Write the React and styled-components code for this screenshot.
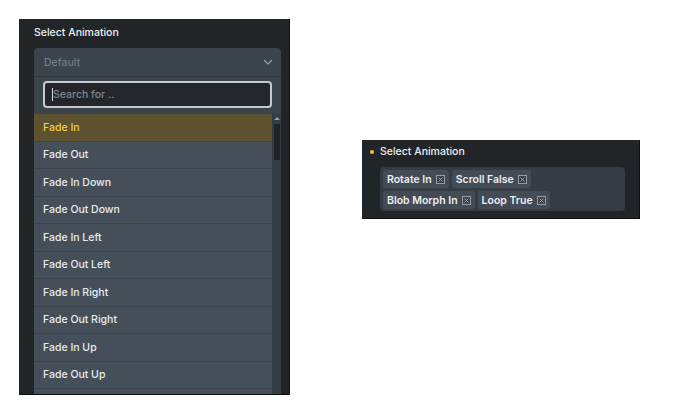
import React from 'react';
import styled, { createGlobalStyle } from 'styled-components';

const GlobalStyle = createGlobalStyle`
  html, body {
    margin: 0;
    padding: 0;
    background: #ffffff;
    font-family: Inter, "Noto Sans", sans-serif;
  }
`;

const Page = styled.div`
  display: flex;
  align-items: flex-start;
  gap: 72px;
  padding: 19px 0 0 19px;
  width: 690px;
  height: 416px;
  box-sizing: border-box;
  overflow: hidden;
`;

const Panel = styled.div`
  width: 271px;
  height: 376px;
  box-sizing: border-box;
  background: #212528;
  border-right: 1px solid #0d0f10;
  border-bottom: 1px solid #0d0f10;
  padding: 0 8px 0 15px;
  overflow: hidden;
  display: flex;
  flex-direction: column;
`;

const Title = styled.div`
  font-size: 10.5px;
  font-weight: 500;
  color: #eef0f2;
  height: 29px;
  display: flex;
  align-items: center;
  padding-bottom: 2px;
  box-sizing: border-box;
  gap: 5px;
`;

const Select = styled.div`
  display: flex;
  flex-direction: column;
  flex: 1;
  min-height: 0;
  background: #3b434b;
  border-radius: 4px 4px 0 0;
`;

const SelectHead = styled.div`
  height: 28px;
  display: flex;
  align-items: center;
  justify-content: space-between;
  padding: 0 8px 0 10px;
  font-size: 10.5px;
  font-weight: 500;
  color: #737b83;
  border-bottom: 1px solid #30373e;
`;

const SearchWrap = styled.div`
  padding: 4px 9px 6px 9px;
`;

const SearchBox = styled.div`
  height: 27px;
  box-sizing: border-box;
  border: 2px solid #c6cacf;
  border-radius: 4px;
  background: #23272b;
  display: flex;
  align-items: center;
  padding-left: 7px;
  font-size: 10.5px;
  font-weight: 500;
  color: #80868c;
`;

const Caret = styled.span`
  display: inline-block;
  width: 1px;
  height: 13px;
  background: #d8dbde;
`;

const ListArea = styled.div`
  display: flex;
  flex: 1;
  min-height: 0;
`;

const List = styled.div`
  flex: 1;
  display: flex;
  flex-direction: column;
  background: #454f59;
`;

const Item = styled.div`
  height: 27.5px;
  flex-shrink: 0;
  box-sizing: border-box;
  display: flex;
  align-items: center;
  padding-left: 9px;
  font-size: 10.5px;
  font-weight: 500;
  background: ${p => (p.$active ? '#5c522f' : '#454f59')};
  color: ${p => (p.$active ? '#f7cc3d' : '#e9ecee')};
  border-bottom: 1px solid #3a434c;
`;

const Scrollbar = styled.div`
  width: 9px;
  background: #353d44;
  display: flex;
  flex-direction: column;
  align-items: center;
  padding-top: 3px;
`;

const Arrow = styled.div`
  width: 0;
  height: 0;
  border-left: 3px solid transparent;
  border-right: 3px solid transparent;
  border-bottom: 3px solid #9aa1a7;
`;

const Thumb = styled.div`
  width: 6px;
  height: 36px;
  margin-top: 4px;
  background: #1f2326;
  border-radius: 1px;
`;

const SmallPanel = styled.div`
  margin-top: 121px;
  width: 278px;
  height: 79px;
  box-sizing: border-box;
  background: #212528;
  border-right: 1px solid #0d0f10;
  border-bottom: 1px solid #0d0f10;
  padding: 0 14px 0 8px;
  display: flex;
  flex-direction: column;
`;

const Dot = styled.span`
  width: 4px;
  height: 4px;
  border-radius: 50%;
  background: #f2c230;
  margin-right: 1px;
`;

const SmallTitle = styled(Title)`
  height: 23px;
  padding-bottom: 0;
  padding-top: 0;
`;

const TagBox = styled.div`
  margin-left: 10px;
  margin-top: 4px;
  background: #353c44;
  border-radius: 4px;
  padding: 3px 3px 2px 3px;
  display: flex;
  flex-wrap: wrap;
  gap: 3px;
`;

const Tag = styled.div`
  height: 18px;
  display: flex;
  align-items: center;
  gap: 4px;
  padding: 0 4px;
  background: #434c55;
  border-radius: 3px;
  font-size: 10.5px;
  font-weight: 600;
  color: #eceef0;
`;

const CloseBox = styled.span`
  width: 9px;
  height: 9px;
  box-sizing: border-box;
  border: 1px solid #959ca3;
  background: #394149;
  display: flex;
  align-items: center;
  justify-content: center;
`;

const Chevron = () => (
  <svg width="10" height="6" viewBox="0 0 10 6" fill="none">
    <path d="M1 1l4 4 4-4" stroke="#9aa1a8" strokeWidth="1.1" />
  </svg>
);

const X = () => (
  <svg width="5" height="5" viewBox="0 0 5 5">
    <path d="M0.5 0.5l4 4M4.5 0.5l-4 4" stroke="#a3aab0" strokeWidth="0.9" />
  </svg>
);

const items = [
  'Fade In',
  'Fade Out',
  'Fade In Down',
  'Fade Out Down',
  'Fade In Left',
  'Fade Out Left',
  'Fade In Right',
  'Fade Out Right',
  'Fade In Up',
  'Fade Out Up',
];

const tags = ['Rotate In', 'Scroll False', 'Blob Morph In', 'Loop True'];

export default function App() {
  return (
    <>
      <GlobalStyle />
      <Page>
        <Panel>
          <Title>Select Animation</Title>
          <Select>
            <SelectHead>
              <span>Default</span>
              <Chevron />
            </SelectHead>
            <SearchWrap>
              <SearchBox>
                <Caret />
                Search for ..
              </SearchBox>
            </SearchWrap>
            <ListArea>
              <List>
                {items.map((it, i) => (
                  <Item key={it} $active={i === 0}>
                    {it}
                  </Item>
                ))}
              </List>
              <Scrollbar>
                <Arrow />
                <Thumb />
              </Scrollbar>
            </ListArea>
          </Select>
        </Panel>
        <SmallPanel>
          <SmallTitle>
            <Dot />
            Select Animation
          </SmallTitle>
          <TagBox>
            {tags.map(t => (
              <Tag key={t}>
                {t}
                <CloseBox>
                  <X />
                </CloseBox>
              </Tag>
            ))}
          </TagBox>
        </SmallPanel>
      </Page>
    </>
  );
}
